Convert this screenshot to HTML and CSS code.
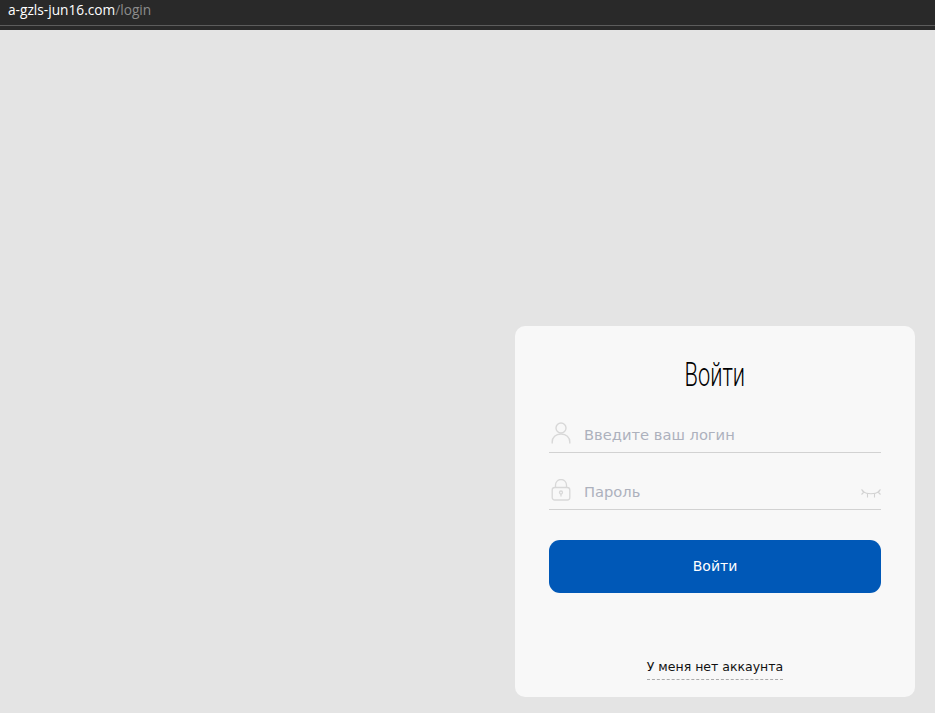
FILE: index.html
```html
<!DOCTYPE html>
<html lang="ru">
<head>
<meta charset="utf-8">
<title>Войти</title>
<link rel="stylesheet" href="styles.css">
</head>
<body>
<header class="urlbar">
  <div class="urlbar-row"><span class="host">a-gzls-jun16.com</span><span class="path">/login</span></div>
  <div class="urlbar-rest"></div>
</header>
<main class="stage">
  <form class="card">
    <h1 class="title"><span class="title-text">Войти</span></h1>
    <div class="field field-login">
      <svg class="icon" width="20" height="22" viewBox="0 0 20 22" fill="none" stroke="#d8d8d8" stroke-width="1.4"><circle cx="10" cy="6" r="5"/><path d="M1.200 21.500v-1.500c0-4.500 3.500-8 8.800-8s8.800 3.500 8.800 8v1.500"/></svg>
      <span class="placeholder">Введите ваш логин</span>
    </div>
    <div class="field field-pass">
      <svg class="icon" width="20" height="22" viewBox="0 0 20 22" fill="none" stroke="#d8d8d8" stroke-width="1.3"><rect x="1.200" y="8.500" width="17.600" height="12.500" rx="2.500"/><path d="M4.500 8.500V6a5.500 5.500 0 0 1 11 0v2.500"/><circle cx="10" cy="13.500" r="1.500"/><path d="M10 15v2.500"/></svg>
      <span class="placeholder">Пароль</span>
      <svg class="eye" width="20" height="10" viewBox="0 0 20 10" fill="none" stroke="#d2d2d2" stroke-width="1.100"><path d="M1.500 2.500c5 3 12 3 17 0"/><path d="M.5 .5l2.500 2.500M.5 5.500l2.500-2.500M6.500 4.500v4M13.500 4.500v4M19.500 .5l-2.500 2.500M19.500 5.500l-2.500-2.500"/></svg>
    </div>
    <button class="submit" type="button">Войти</button>
    <div class="foot"><a class="signup">У меня нет аккаунта</a></div>
  </form>
</main>
</body>
</html>
```
FILE: styles.css
```css
* { box-sizing: border-box; }
html, body { margin: 0; padding: 0; height: 713px; overflow: hidden; }
body { background: #e4e4e4; font-family: "DejaVu Sans", "Noto Sans", sans-serif; }

.urlbar { height: 30px; background: #292929; display: flex; flex-direction: column; }
.urlbar-row { height: 26px; border-bottom: 1px solid #5c5c5c; padding: 0 0 0 8px; font: 13.7px/20px "Open Sans", "Liberation Sans", sans-serif; }
.host { color: #fff; }
.path { color: #8c8c8c; }
.urlbar-rest { flex: 1; }

.stage { display: flex; justify-content: flex-end; padding: 296px 20px 0 0; }
.card { width: 400px; height: 371px; background: #f8f8f8; border-radius: 10px; padding: 29px 34px 0; display: flex; flex-direction: column; }

.title { margin: 0; height: 38px; padding-top: 1px; text-align: center; font: 300 33px/38px "Roboto", "Liberation Sans Narrow", sans-serif; color: #000; }
.title-text { display: inline-block; transform: scaleX(0.66); }

.field { display: flex; align-items: center; height: 40px; padding-top: 5px; border-bottom: 1px solid #d2d2d2; position: relative; padding-left: 2px; }
.field-login { margin-top: 20px; }
.field-pass { margin-top: 17px; }
.icon { flex: none; margin-top: -5px; margin-right: 13px; }
.placeholder { font-size: 14.700px; line-height: 20px; color: #adb1bd; }
.eye { position: absolute; right: 0; top: 19px; }

.submit { margin-top: 30px; height: 53px; width: 100%; border: 0; border-radius: 11px; padding-bottom: 2px; background: #0058b7; color: #fff; font: 400 14px/20px "DejaVu Sans", sans-serif; }

.foot { margin-top: 63px; text-align: center; }
.signup { display: inline-block; font-size: 12.500px; line-height: 17px; padding-bottom: 4px; color: #111; border-bottom: 1px dashed #aaa; }
```
